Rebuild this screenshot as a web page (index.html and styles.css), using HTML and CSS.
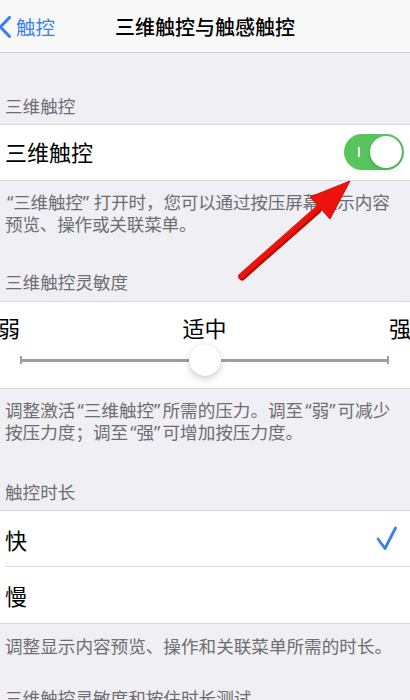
FILE: index.html
```html
<!DOCTYPE html>
<html lang="zh-CN">
<head>
<meta charset="utf-8">
<title>三维触控与触感触控</title>
<link rel="stylesheet" href="styles.css">
</head>
<body>
<div class="screen">
  <header class="nav">
    <a class="back">
      <svg class="chev" width="12" height="22" viewBox="0 0 12 22"><polyline points="10.5,1.5 1.5,11 10.5,20.5" fill="none" stroke="#3b80ee" stroke-width="3" stroke-linecap="round" stroke-linejoin="round"/></svg>
      <span>触控</span>
    </a>
    <h1 class="title">三维触控与触感触控</h1>
    <span></span>
  </header>

  <div class="group-header gh1">三维触控</div>
  <div class="cell-group">
    <div class="cell">
      <span class="cell-label lift">三维触控</span>
      <span class="switch"><span class="switch-on-mark"></span><span class="knob"></span></span>
    </div>
  </div>
  <div class="group-footer f1"><span class="ql">“</span>三维触控<span class="qr qw">”</span>打开时，您可以通过按压屏幕显示内容预览、操作或关联菜单。</div>

  <div class="group-header gh2">三维触控灵敏度</div>
  <div class="cell-group">
    <div class="slider-cell">
      <div class="slider-labels">
        <span class="lbl-left">弱</span>
        <span>适中</span>
        <span class="lbl-right">强</span>
      </div>
      <div class="slider">
        <span class="cap"></span>
        <span class="track"></span>
        <span class="thumb"></span>
        <span class="track"></span>
        <span class="cap"></span>
      </div>
    </div>
  </div>
  <div class="group-footer f2">调整激活<span class="ql">“</span>三维触控<span class="qr">”</span>所需的压力。调至<span class="ql">“</span>弱<span class="qr">”</span>可减少按压力度；调至<span class="ql">“</span>强<span class="qr">”</span>可增加按压力度。</div>

  <div class="group-header gh3">触控时长</div>
  <div class="cell-group">
    <div class="cell cell-sep">
      <span class="cell-label">快</span>
      <svg class="check" width="22" height="28" viewBox="0 0 22 28"><polyline points="2,14 9,23.5 19.5,3" fill="none" stroke="#3b7fe8" stroke-width="2.8" stroke-linecap="round" stroke-linejoin="round"/></svg>
    </div>
    <div class="cell cell-tall">
      <span class="cell-label">慢</span>
    </div>
  </div>
  <div class="group-footer f3">调整显示内容预览、操作和关联菜单所需的时长。</div>

  <div class="group-header gh4">三维触控灵敏度和按住时长测试</div>

  <svg class="annot" width="410" height="700" viewBox="0 0 410 700">
    <line x1="242" y1="277" x2="318" y2="210" stroke="#b50b08" stroke-width="7" stroke-linecap="round"/>
    <line x1="241" y1="276" x2="318" y2="208" stroke="#ec130f" stroke-width="5.5" stroke-linecap="round"/>
    <polygon points="350,181 310,197 330,219" fill="#ec130f" stroke="#d00e0a" stroke-width="1" stroke-linejoin="round"/>
  </svg>
</div>
</body>
</html>
```

FILE: styles.css
```css
* { box-sizing: border-box; }
html, body { margin: 0; padding: 0; }
body {
  background: #efeff4;
  font-family: "Noto Sans CJK SC", "Noto Sans", sans-serif;
  color: #000;
}
.screen {
  position: relative;
  width: 410px;
  height: 700px;
  overflow: hidden;
  background: #efeff4;
}
.nav {
  height: 53px;
  background: #f8f8f9;
  border-bottom: 1px solid #cfcfd3;
  display: grid;
  grid-template-columns: 1fr auto 1fr;
  align-items: center;
}
.back {
  display: flex;
  align-items: center;
  gap: 5px;
  color: #3b80ee;
  font-size: 19.5px;
  line-height: 24px;
  padding-top: 2px;
}
.chev { margin-left: -1px; }
.title {
  margin: 0;
  font-size: 20px;
  font-weight: 500;
  line-height: 24px;
  padding-top: 2px;
}
.group-header {
  padding: 0 5px 7px;
  font-size: 17.6px;
  line-height: 22px;
  color: #6d6d72;
  white-space: nowrap;
}
.gh1 { padding-top: 42px; }
.gh2 { padding-top: 36px; padding-bottom: 8px; }
.gh3 { padding-top: 38px; }
.gh4 { padding-top: 30px; }
.cell-group {
  background: #fff;
  border-top: 1px solid #d8d8dc;
  border-bottom: 1px solid #d8d8dc;
}
.cell {
  height: 55px;
  display: flex;
  align-items: center;
  justify-content: space-between;
  padding: 0 6px 0 5px;
}
.cell-sep {
  height: 56px;
  border-bottom: 1px solid #dcdce0;
  margin-left: 5px;
  padding-left: 0;
}
.cell-tall { height: 56px; }
.cell-label {
  font-size: 22px;
  line-height: 28px;
}
.lift { margin-top: -3px; }
.switch {
  position: relative;
  width: 60px;
  height: 36px;
  border-radius: 18px;
  background: #58c45d;
  display: flex;
  align-items: center;
  justify-content: flex-end;
  padding-right: 2px;
  margin-top: -2px;
}
.switch-on-mark {
  position: absolute;
  left: 14px;
  top: 13px;
  width: 1.5px;
  height: 10px;
  background: #fff;
}
.knob {
  width: 32px;
  height: 32px;
  border-radius: 50%;
  background: #fff;
  box-shadow: 0 2px 4px rgba(0,0,0,0.15);
}
.check { margin-right: 6px; }
.group-footer {
  padding: 10px 15px 0 5px;
  font-size: 17.6px;
  line-height: 22px;
  color: #6d6d72;
}
.f1 { padding-right: 10px; letter-spacing: -0.2px; }
.ql, .qr { font-family: "Noto Sans", sans-serif; }
.ql { padding-left: 2px; }
.qr { padding-right: 2px; }
.qw { padding-right: 5px; }
.f3 { padding-top: 11px; }
.slider-cell {
  height: 86px;
  padding-top: 12px;
}
.slider-labels {
  display: flex;
  justify-content: space-between;
  font-size: 22px;
  line-height: 26px;
  margin: 0 0 4px -2px;
}
.lbl-right { margin-right: -1px; }
.slider {
  display: flex;
  align-items: center;
  padding: 0 21px 0 20px;
  height: 32px;
}
.cap {
  width: 2px;
  height: 8px;
  background: #9e9e9e;
}
.track {
  flex: 1;
  height: 3px;
  background: #9e9e9e;
}
.thumb {
  width: 32px;
  height: 32px;
  border-radius: 50%;
  background: #fff;
  box-shadow: 0 3px 7px rgba(0,0,0,0.18), 0 0 1px rgba(0,0,0,0.2);
}
.annot {
  position: absolute;
  left: 0;
  top: 0;
  pointer-events: none;
}
```
